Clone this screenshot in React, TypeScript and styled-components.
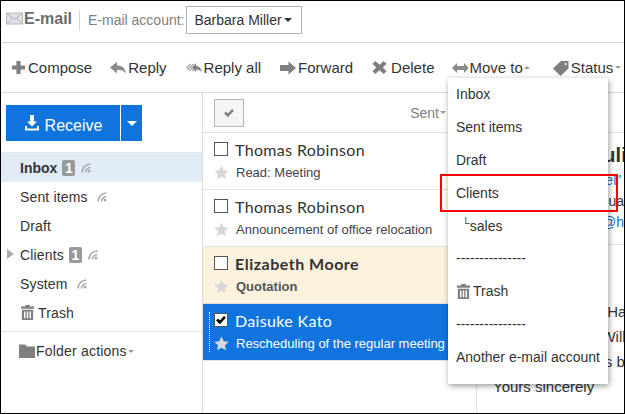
import React from 'react';
import styled, { createGlobalStyle } from 'styled-components';

const GlobalStyle = createGlobalStyle`
    html, body {
        margin: 0;
        padding: 0;
        background: #fff;
    }
`;

const GREY = '#7f7f7f';

const PATHS: Record<string, string> = {
    plus: 'M5.800 1h4.400v4.800H15v4.400h-4.800V15H5.800v-4.800H1V5.800h4.800z',
    reply: 'M7 2v3.500c5 0 8 2.500 9 8-2-2.800-5-3.800-9-3.800V13.500L0 7.500z',
    forward: 'M8.500 1.500L16 8l-7.500 6.500V11H0V5h8.500z',
    cross: 'M3.500 1L8 5l4.500-4L15.500 4l-4 4 4 4-3 3L8 11l-4.500 4-3-3 4-4-4-4z',
    leftRight: 'M5 3v3h7V3l5 5-5 5v-3H5v3L0 8z',
    tag: 'M8 1h7.500v7.500L7.500 16 0 8.500zM12.500 3a1 1 0 1 0 .01 0z',
    download: 'M6 0h4v6.500h3L8 11.500 3 6.500h3zM1 11h2v2.500h10V11h2v4.500H1z',
    check: 'M1.500 8.500l2.500-2.500 2.500 2.500L12 2.500l2.500 2.500-8 8.500z',
    trash: 'M5.500 0h5v1.500H15v2.500H1V1.500h4.500zM2 5h12v11H2zM4.300 7v7h1.500V7zM7.250 7v7h1.500V7zM10.200 7v7h1.500V7z',
    folder: 'M0 1.500h6l2 2h8V15H0z',
    star: 'M8 .5l2.300 5 5.400.600-4 3.700 1.100 5.400L8 12.500l-4.800 2.700 1.100-5.400-4-3.700 5.400-.600z',
};

const Glyph = styled.svg<{ $size: number; $color?: string }>`
    flex: none;
    width: ${(p) => p.$size}px;
    height: ${(p) => p.$size}px;
    fill: ${(p) => p.$color || GREY};
`;

const Icon = ({ name, size = 16, color }: { name: string; size?: number; color?: string }) => (
    <Glyph viewBox="0 0 16 16" $size={size} $color={color}>
        <path fillRule="evenodd" d={PATHS[name]} />
    </Glyph>
);

const ReplyAllIcon = () => (
    <Glyph viewBox="0 0 16 16" $size={16} $color="#a8a8a8">
        <path d="M4 3.500L0 7.500l4 4 1-1-3-3 3-3z" />
        <path d="M7 3.500L3 7.500l4 4 1-1-3-3 3-3z" />
        <path fill={GREY} d="M10 3v3c3 0 5 2 6 6.500-1.500-2.200-3.500-3-6-3V12L6 7.500z" />
    </Glyph>
);

const MailIcon = () => (
    <Glyph viewBox="0 0 17 14" $size={17} $color="#dfe3e7">
        <rect x="0.500" y="1.500" width="16" height="11" stroke="#b4b8bc" />
        <path d="M1 2l7.500 6L16 2M1 12l5.500-5.500M16 12l-5.500-5.500" fill="none" stroke="#aeb3b8" />
    </Glyph>
);

const RssIcon = ({ roomy }: { roomy: boolean }) => (
    <RssGlyph viewBox="0 0 10 10" $roomy={roomy}>
        <circle cx="8" cy="8" r="1.500" fill="#aaa" />
        <path d="M9.500 4.500A5 5 0 0 0 4.500 9.500M9.500 1A8.500 8.500 0 0 0 1 9.500" fill="none" stroke="#aaa" strokeWidth="1.600" />
    </RssGlyph>
);

const Frame = styled.div`
    position: relative;
    box-sizing: border-box;
    width: 625px;
    height: 414px;
    border: 1px solid #000;
    overflow: hidden;
    display: flex;
    flex-direction: column;
    background: #fff;
    font-family: 'Liberation Sans', Arial, sans-serif;
    font-size: 15px;
    color: #333;
`;

const Header = styled.header`
    flex: none;
    height: 41px;
    box-sizing: border-box;
    display: flex;
    align-items: center;
    padding: 0 0 3px 5px;
`;

const Rule = styled.div`
    flex: none;
    height: 1px;
    background: #d9d9d9;
`;

const Brand = styled.div`
    display: flex;
    align-items: center;
    gap: 1px;
    box-sizing: border-box;
    height: 21px;
    padding: 0 7px 3px 0;
    border-right: 1px solid #d4d4d4;
    font-weight: bold;
    font-size: 16px;
    color: #6b6b6b;
`;

const AccountLabel = styled.span`
    margin-left: 8px;
    font-size: 14px;
    color: #808080;
`;

const AccountSelect = styled.div`
    margin-left: 1px;
    height: 28px;
    width: 116px;
    box-sizing: border-box;
    border: 1px solid #b3b3b3;
    display: flex;
    align-items: center;
    padding-left: 8px;
    font-size: 14px;
    color: #333;
    gap: 2px;
`;

const Caret = styled.i<{ $size?: number; $color?: string; $up?: boolean }>`
    flex: none;
    width: 0;
    height: 0;
    border-left: ${(p) => p.$size || 4}px solid transparent;
    border-right: ${(p) => p.$size || 4}px solid transparent;
    ${(p) => (p.$up ? 'border-bottom' : 'border-top')}: ${(p) => p.$size || 4}px solid ${(p) => p.$color || '#333'};
`;

const Toolbar = styled.nav`
    flex: none;
    height: 49px;
    display: flex;
    align-items: center;
    gap: 19px;
    padding-left: 10px;
    white-space: nowrap;
`;

const ToolButton = styled.div<{ $gap?: number; $after?: number }>`
    display: flex;
    align-items: center;
    gap: ${(p) => p.$gap ?? 2}px;
    margin-right: ${(p) => p.$after ?? 0}px;
    color: #333;
`;

const Body = styled.div`
    flex: 1;
    min-height: 0;
    display: flex;
`;

const Sidebar = styled.aside`
    flex: none;
    width: 201px;
    border-right: 1px solid #dcdcdc;
`;

const ReceiveBar = styled.div`
    display: flex;
    padding: 12px 0 11px 5px;
    gap: 1px;
`;

const ReceiveButton = styled.div`
    width: 114px;
    height: 36px;
    background: #0f74de;
    color: #fff;
    font-size: 16px;
    display: flex;
    align-items: center;
    justify-content: center;
    gap: 5px;
`;

const ReceiveLabel = styled.span`
    padding-top: 6px;
`;

const ReceiveMenu = styled.div`
    width: 21px;
    height: 36px;
    background: #0f74de;
    display: flex;
    align-items: center;
    justify-content: center;
`;

const FolderList = styled.ul`
    list-style: none;
    margin: 0;
    padding: 0 0 4px;
    border-top: 1px solid #e4e4e4;
    border-bottom: 1px solid #e4e4e4;
`;

const FolderRow = styled.li<{ $active?: boolean }>`
    position: relative;
    height: 29px;
    padding-left: 19px;
    display: flex;
    align-items: center;
    font-size: 14px;
    letter-spacing: ${(p) => (p.$active ? '0' : '0.15px')};
    color: #333;
    background: ${(p) => (p.$active ? '#e1ecf7' : 'transparent')};
    font-weight: ${(p) => (p.$active ? 'bold' : 'normal')};
`;

const Badge = styled.span`
    width: 13px;
    height: 16px;
    margin-left: 5px;
    border-radius: 2px;
    background: #999;
    color: #fff;
    font-size: 14px;
    font-weight: bold;
    display: flex;
    align-items: center;
    justify-content: center;
`;

const RssGlyph = styled.svg<{ $roomy: boolean }>`
    flex: none;
    width: 10px;
    height: 10px;
    margin-left: ${(p) => (p.$roomy ? 9 : 6)}px;
    margin-top: 1px;
`;

const TrashLabel = styled.span`
    margin-left: 3px;
`;

const Expander = styled.i`
    position: absolute;
    left: 6px;
    top: 9px;
    width: 0;
    height: 0;
    border-top: 5.5px solid transparent;
    border-bottom: 5.5px solid transparent;
    border-left: 7px solid #aaa;
`;

const FolderActions = styled.div`
    display: flex;
    align-items: center;
    gap: 1px;
    padding: 11px 0 0 18px;
    font-size: 14px;
    letter-spacing: 0.2px;
`;

const MailList = styled.section`
    flex: none;
    width: 273px;
`;

const ListHead = styled.div`
    box-sizing: border-box;
    height: 40px;
    border-bottom: 1px solid #e2e2e2;
    display: flex;
    align-items: center;
    padding: 0 30px 0 11px;
    justify-content: space-between;
`;

const SelectAll = styled.div`
    box-sizing: border-box;
    width: 30px;
    height: 28px;
    border: 1px solid #b5b5b5;
    background: #f5f5f5;
    display: flex;
    align-items: center;
    justify-content: center;
`;

const SortLabel = styled.div`
    display: flex;
    align-items: center;
    gap: 1px;
    font-size: 14px;
    color: #808080;
`;

const MailRow = styled.div<{ $tone?: 'unread' | 'selected' }>`
    position: relative;
    box-sizing: border-box;
    height: 57px;
    border-bottom: 1px solid #e2e2e2;
    padding: 7px 0 0 11px;
    background: ${(p) => (p.$tone === 'unread' ? '#fcf2de' : p.$tone === 'selected' ? '#0f74de' : '#fff')};
    color: ${(p) => (p.$tone === 'selected' ? '#fff' : '#333')};
    white-space: nowrap;
`;

const FocusLine = styled.i`
    position: absolute;
    left: 6px;
    top: 8px;
    height: 40px;
    border-left: 1px dotted #fff;
`;

const NameLine = styled.div<{ $bold?: boolean }>`
    display: flex;
    align-items: center;
    gap: 7px;
    height: 18px;
    font-family: Lato, sans-serif;
    font-size: 16px;
    letter-spacing: ${(p) => (p.$bold ? '0.5px' : '0.35px')};
    font-weight: ${(p) => (p.$bold ? 'bold' : 'normal')};
    color: inherit;
`;

const Check = styled.span`
    flex: none;
    box-sizing: border-box;
    width: 14px;
    height: 14px;
    border: 1px solid #555;
    background: #fff;
    display: flex;
    align-items: center;
    justify-content: center;
`;

const SubjectLine = styled.div<{ $bold?: boolean; $light?: boolean }>`
    display: flex;
    align-items: center;
    gap: 7px;
    margin-top: 4px;
    height: 20px;
    font-size: 13px;
    font-weight: ${(p) => (p.$bold ? 'bold' : 'normal')};
    color: ${(p) => (p.$light ? '#fff' : p.$bold ? '#555' : '#444')};
`;

const Preview = styled.section`
    flex: 1;
    min-width: 0;
    border-left: 1px solid #e2e2e2;
    overflow: hidden;
    white-space: nowrap;
`;

const PreviewHead = styled.div`
    box-sizing: border-box;
    height: 40px;
    border-bottom: 1px solid #e2e2e2;
`;

const Subject = styled.h2`
    margin: 0;
    padding: 10px 0 0 43px;
    height: 27px;
    font-size: 20px;
    font-weight: bold;
    color: #333;
    line-height: 24px;
`;

const MetaLine = styled.div<{ $link?: boolean }>`
    height: 21px;
    padding-left: 58px;
    font-size: 14px;
    line-height: 21px;
    color: ${(p) => (p.$link ? '#1a73c9' : '#333')};
`;

const MetaBlock = styled.div`
    box-sizing: border-box;
    height: 112px;
    border-bottom: 1px solid #e2e2e2;
`;

const Letter = styled.div`
    padding: 54px 0 0 16px;
    font-size: 15px;
    line-height: 25px;
    color: #333;
`;

const Menu = styled.ul`
    position: absolute;
    left: 447px;
    top: 77px;
    width: 160px;
    height: 306px;
    box-sizing: border-box;
    margin: 0;
    padding: 0;
    list-style: none;
    background: #fff;
    box-shadow: 1px 2px 6px rgba(0, 0, 0, 0.4);
    z-index: 2;
`;

const MenuItem = styled.li<{ $indent?: boolean }>`
    height: 32.8px;
    padding-left: ${(p) => (p.$indent ? '14px' : '8px')};
    display: flex;
    align-items: center;
    gap: 2px;
    font-size: 14px;
    color: #333;
    white-space: nowrap;
    overflow: hidden;
`;

const Corner = styled.span`
    font-size: 11px;
    margin-right: -2px;
    margin-top: -6px;
`;

const Highlight = styled.div`
    position: absolute;
    left: 439px;
    top: 173px;
    width: 178px;
    height: 38px;
    box-sizing: border-box;
    border: 2px solid #f00;
    z-index: 3;
`;

const folders = [
    { name: 'Inbox', count: 1, rss: true, active: true },
    { name: 'Sent items', rss: true },
    { name: 'Draft' },
    { name: 'Clients', count: 1, rss: true, expand: true },
    { name: 'System', rss: true },
];

const mails = [
    { name: 'Thomas Robinson', subject: 'Read: Meeting' },
    { name: 'Thomas Robinson', subject: 'Announcement of office relocation' },
    { name: 'Elizabeth Moore', subject: 'Quotation', tone: 'unread' as const },
    { name: 'Daisuke Kato', subject: 'Rescheduling of the regular meeting', tone: 'selected' as const },
];

export default function App() {
    return (
        <Frame>
            <GlobalStyle />
            <Header>
                <Brand>
                    <MailIcon />
                    E-mail
                </Brand>
                <AccountLabel>E-mail account:</AccountLabel>
                <AccountSelect>
                    Barbara Miller
                    <Caret />
                </AccountSelect>
            </Header>
            <Rule />
            <Toolbar>
                <ToolButton $after={-1}>
                    <Icon name="plus" size={15} />
                    Compose
                </ToolButton>
                <ToolButton>
                    <Icon name="reply" color="#8a8a8a" />
                    Reply
                </ToolButton>
                <ToolButton>
                    <ReplyAllIcon />
                    Reply all
                </ToolButton>
                <ToolButton>
                    <Icon name="forward" />
                    Forward
                </ToolButton>
                <ToolButton $gap={4} $after={-1}>
                    <Icon name="cross" size={15} />
                    Delete
                </ToolButton>
                <ToolButton $gap={1} $after={4}>
                    <Icon name="leftRight" color="#8a8a8a" />
                    Move to
                    <Caret $up $size={3} $color="#999" />
                </ToolButton>
                <ToolButton>
                    <Icon name="tag" />
                    Status
                    <Caret $size={3} $color="#999" />
                </ToolButton>
            </Toolbar>
            <Rule />
            <Body>
                <Sidebar>
                    <ReceiveBar>
                        <ReceiveButton>
                            <Icon name="download" color="#fff" />
                            <ReceiveLabel>Receive</ReceiveLabel>
                        </ReceiveButton>
                        <ReceiveMenu>
                            <Caret $size={5} $color="#fff" />
                        </ReceiveMenu>
                    </ReceiveBar>
                    <FolderList>
                        {folders.map((folder) => (
                            <FolderRow key={folder.name} $active={folder.active}>
                                {folder.expand && <Expander />}
                                {folder.name}
                                {folder.count && <Badge>{folder.count}</Badge>}
                                {folder.rss && <RssIcon roomy={!folder.count} />}
                            </FolderRow>
                        ))}
                        <FolderRow>
                            <Icon name="trash" size={15} />
                            <TrashLabel>Trash</TrashLabel>
                        </FolderRow>
                    </FolderList>
                    <FolderActions>
                        <Icon name="folder" />
                        Folder actions
                        <Caret $size={3} $color="#999" />
                    </FolderActions>
                </Sidebar>
                <MailList>
                    <ListHead>
                        <SelectAll>
                            <Icon name="check" size={12} />
                        </SelectAll>
                        <SortLabel>
                            Sent
                            <Caret $size={3} $color="#999" />
                        </SortLabel>
                    </ListHead>
                    {mails.map((mail) => (
                        <MailRow key={mail.subject} $tone={mail.tone}>
                            {mail.tone === 'selected' && <FocusLine />}
                            <NameLine $bold={mail.tone === 'unread'}>
                                <Check>{mail.tone === 'selected' && <Icon name="check" size={12} color="#000" />}</Check>
                                {mail.name}
                            </NameLine>
                            <SubjectLine $bold={mail.tone === 'unread'} $light={mail.tone === 'selected'}>
                                <Icon name="star" size={15} color="#d8d8d8" />
                                {mail.subject}
                            </SubjectLine>
                        </MailRow>
                    ))}
                </MailList>
                <Preview>
                    <PreviewHead />
                    <MetaBlock>
                        <Subject>Rescheduling</Subject>
                        <MetaLine $link>"Kato, Daniel" &lt;</MetaLine>
                        <MetaLine>Tue, 16 January</MetaLine>
                        <MetaLine $link>ka.daisuke@h</MetaLine>
                    </MetaBlock>
                    <Letter>
                        Dear all, and Mr. Ha
                        <br />
                        Please note Mr. Will
                        <br />
                        details when he is b
                        <br />
                        Yours sincerely
                    </Letter>
                </Preview>
            </Body>
            <Menu>
                <MenuItem>Inbox</MenuItem>
                <MenuItem>Sent items</MenuItem>
                <MenuItem>Draft</MenuItem>
                <MenuItem>Clients</MenuItem>
                <MenuItem $indent>
                    <Corner>└</Corner>sales
                </MenuItem>
                <MenuItem>---------------</MenuItem>
                <MenuItem>
                    <Icon name="trash" size={15} />
                    Trash
                </MenuItem>
                <MenuItem>---------------</MenuItem>
                <MenuItem>Another e-mail account</MenuItem>
            </Menu>
            <Highlight />
        </Frame>
    );
}
